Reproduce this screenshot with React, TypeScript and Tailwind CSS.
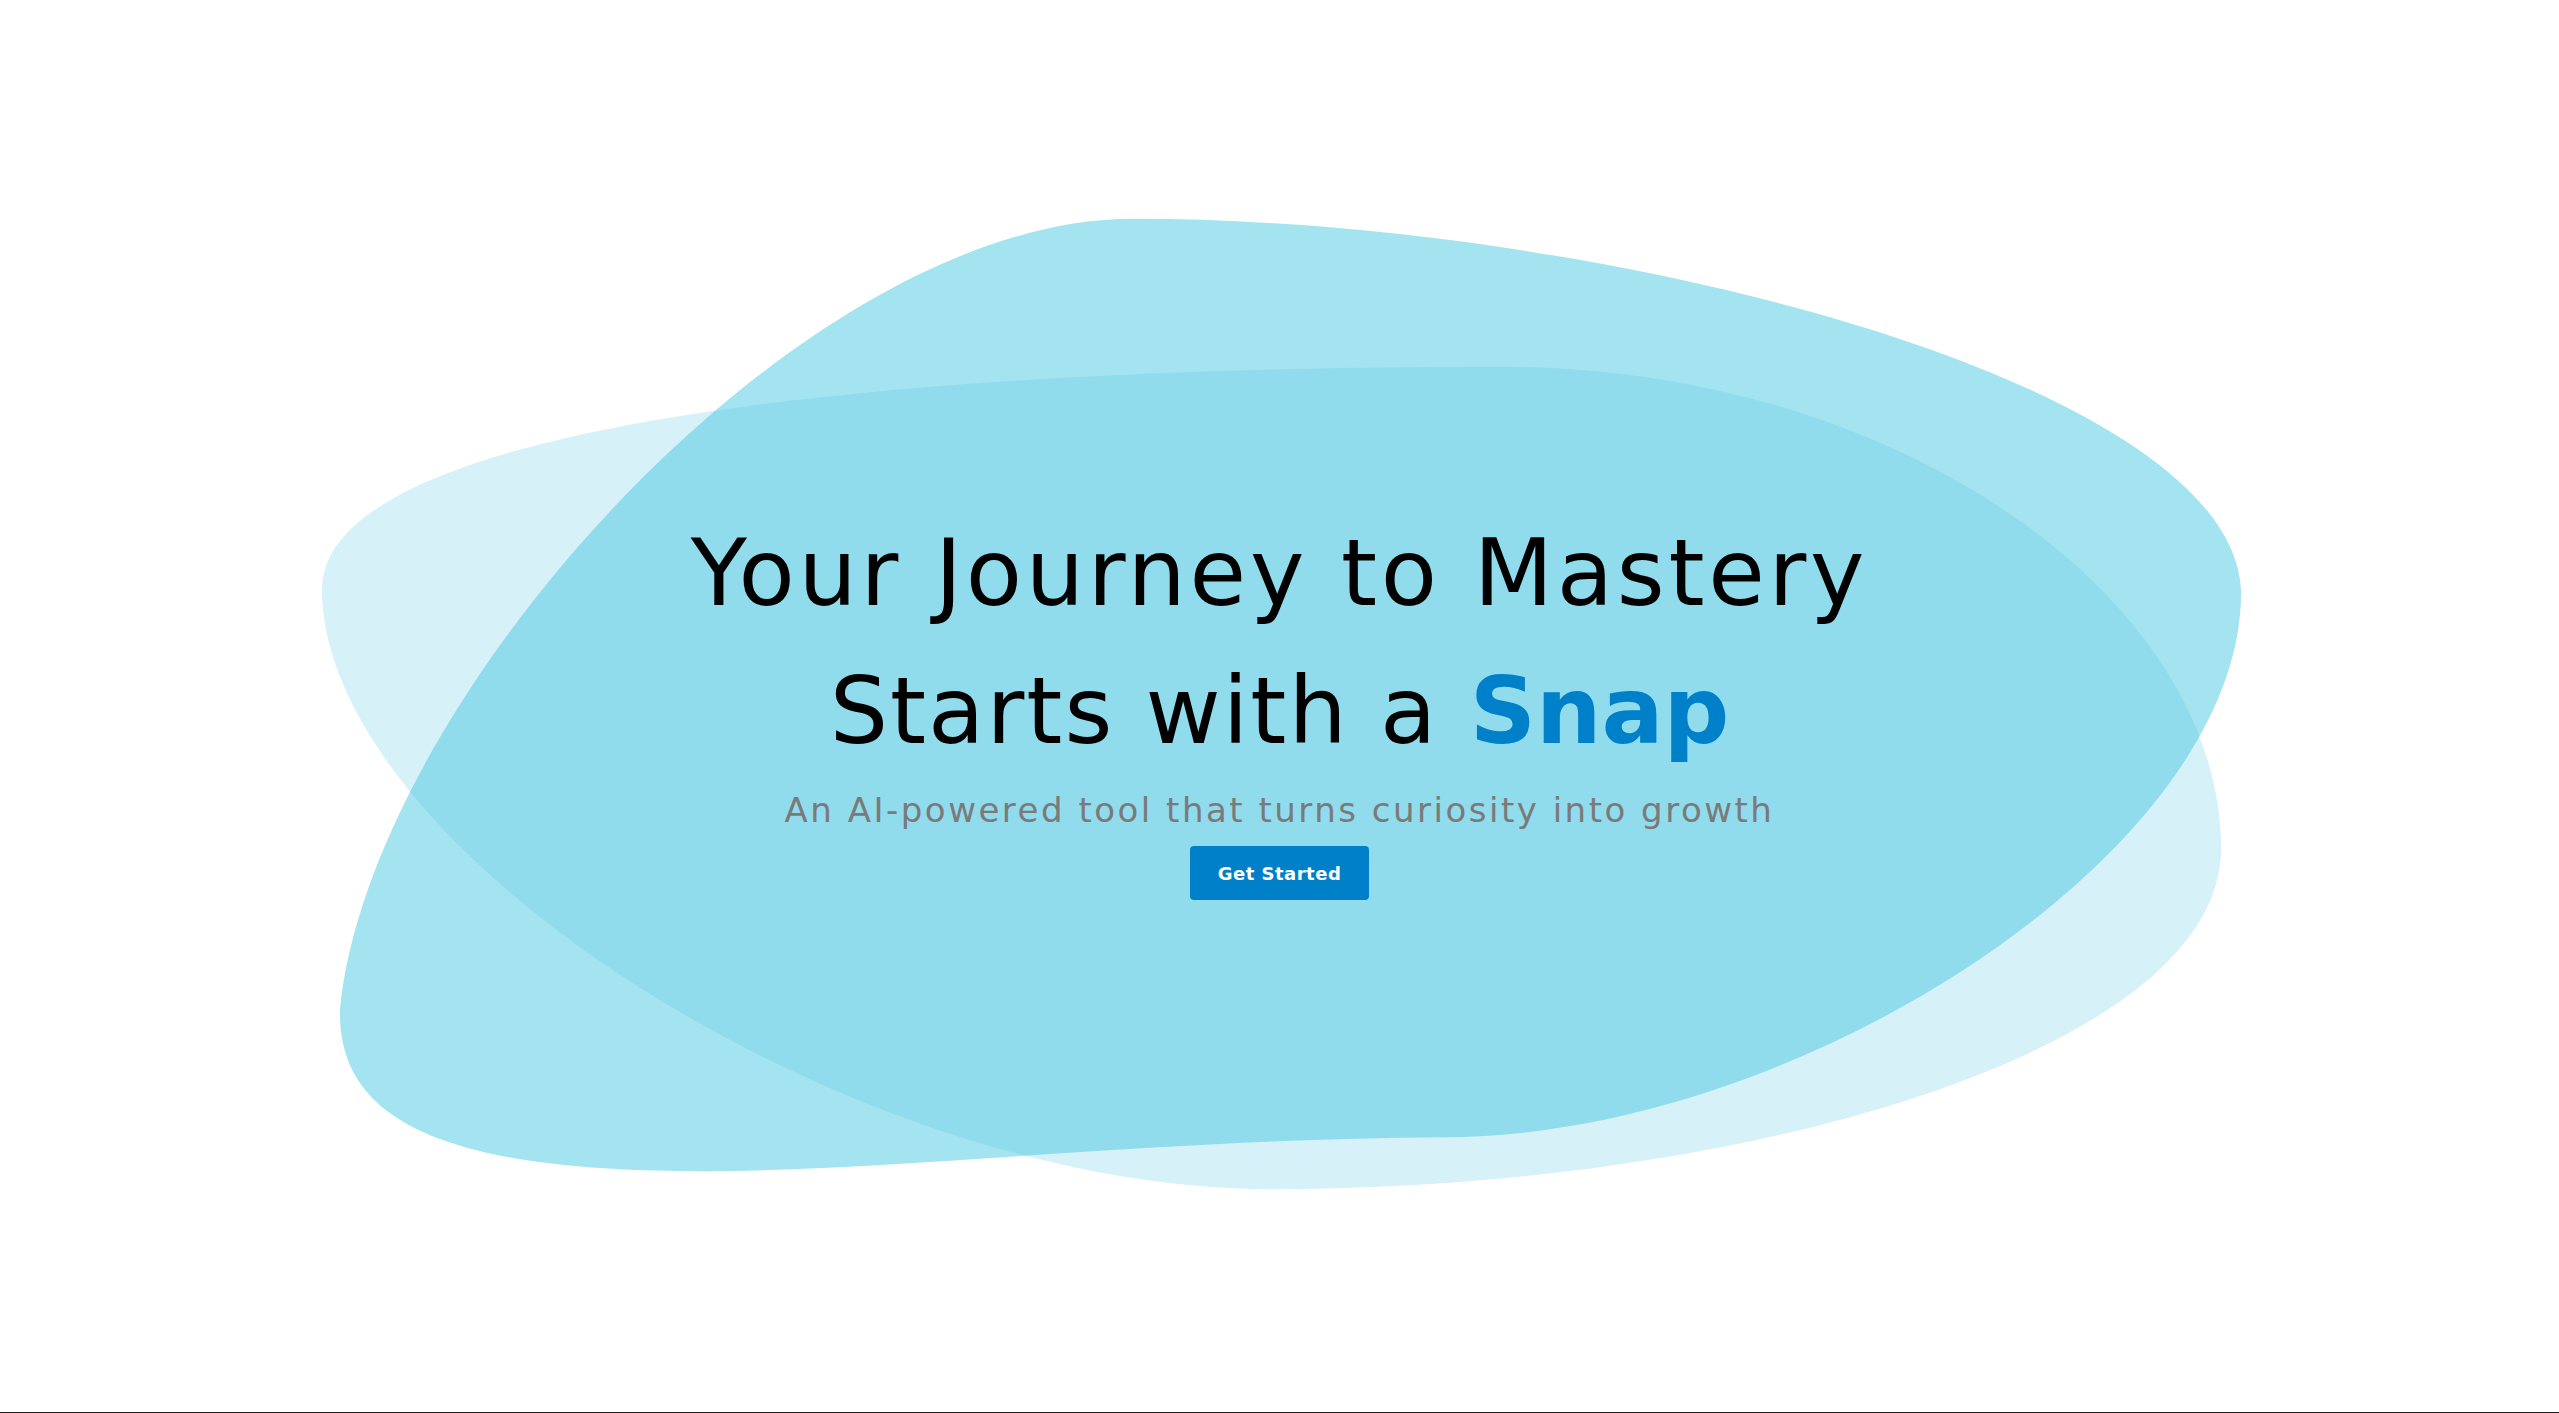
import React from 'react';

const fontStack = '"DejaVu Sans", "Liberation Sans", sans-serif';

function Blobs() {
  return (
    <svg
      className="absolute inset-0 h-full w-full"
      viewBox="0 0 2559 1413"
      preserveAspectRatio="none"
      aria-hidden="true"
    >
      {/* light back blob */}
      <path
        d="M322 590 C322 430 850 367 1500 367 C1900 367 2221 600 2221 849 C2221 1050 1750 1190 1270 1190 C850 1190 322 850 322 590 Z"
        fill="#d6f1f7"
      />
      {/* front blob, half see-through so the overlap reads darker */}
      <path
        d="M1133 219 C1600 219 2230 380 2241 590 C2245 850 1800 1138 1444 1138 C1150 1140 900 1172 698 1172 C420 1172 338 1110 340 1010 C370 700 800 219 1133 219 Z"
        fill="#4cc8e2"
        fillOpacity={0.51}
      />
    </svg>
  );
}

export default function App() {
  return (
    <div
      className="relative flex h-[1413px] w-full flex-col items-center justify-center overflow-hidden border-b border-[#1f1f1f] bg-white pb-[7px]"
      style={{ fontFamily: fontStack }}
    >
      <Blobs />

      <div className="relative flex flex-col items-center text-center">
        <h1 className="text-[92px] font-normal leading-[138px] text-black">
          <span className="tracking-[3.7px]">Your Journey to Mastery</span>
          <br />
          <span className="tracking-[2px]">Starts with a </span>
          <span className="font-bold text-[#0080c8]">Snap</span>
        </h1>
        <p className="mt-[4px] text-[34px] font-normal leading-[51px] tracking-[2.5px] text-[#7a7a7a]">
          An AI-powered tool that turns curiosity into growth
        </p>
        <button className="mt-[10px] h-[54px] w-[179px] rounded-[4px] bg-[#0080c8] text-[18px] font-bold tracking-[0.5px] text-white">
          Get Started
        </button>
      </div>
    </div>
  );
}
